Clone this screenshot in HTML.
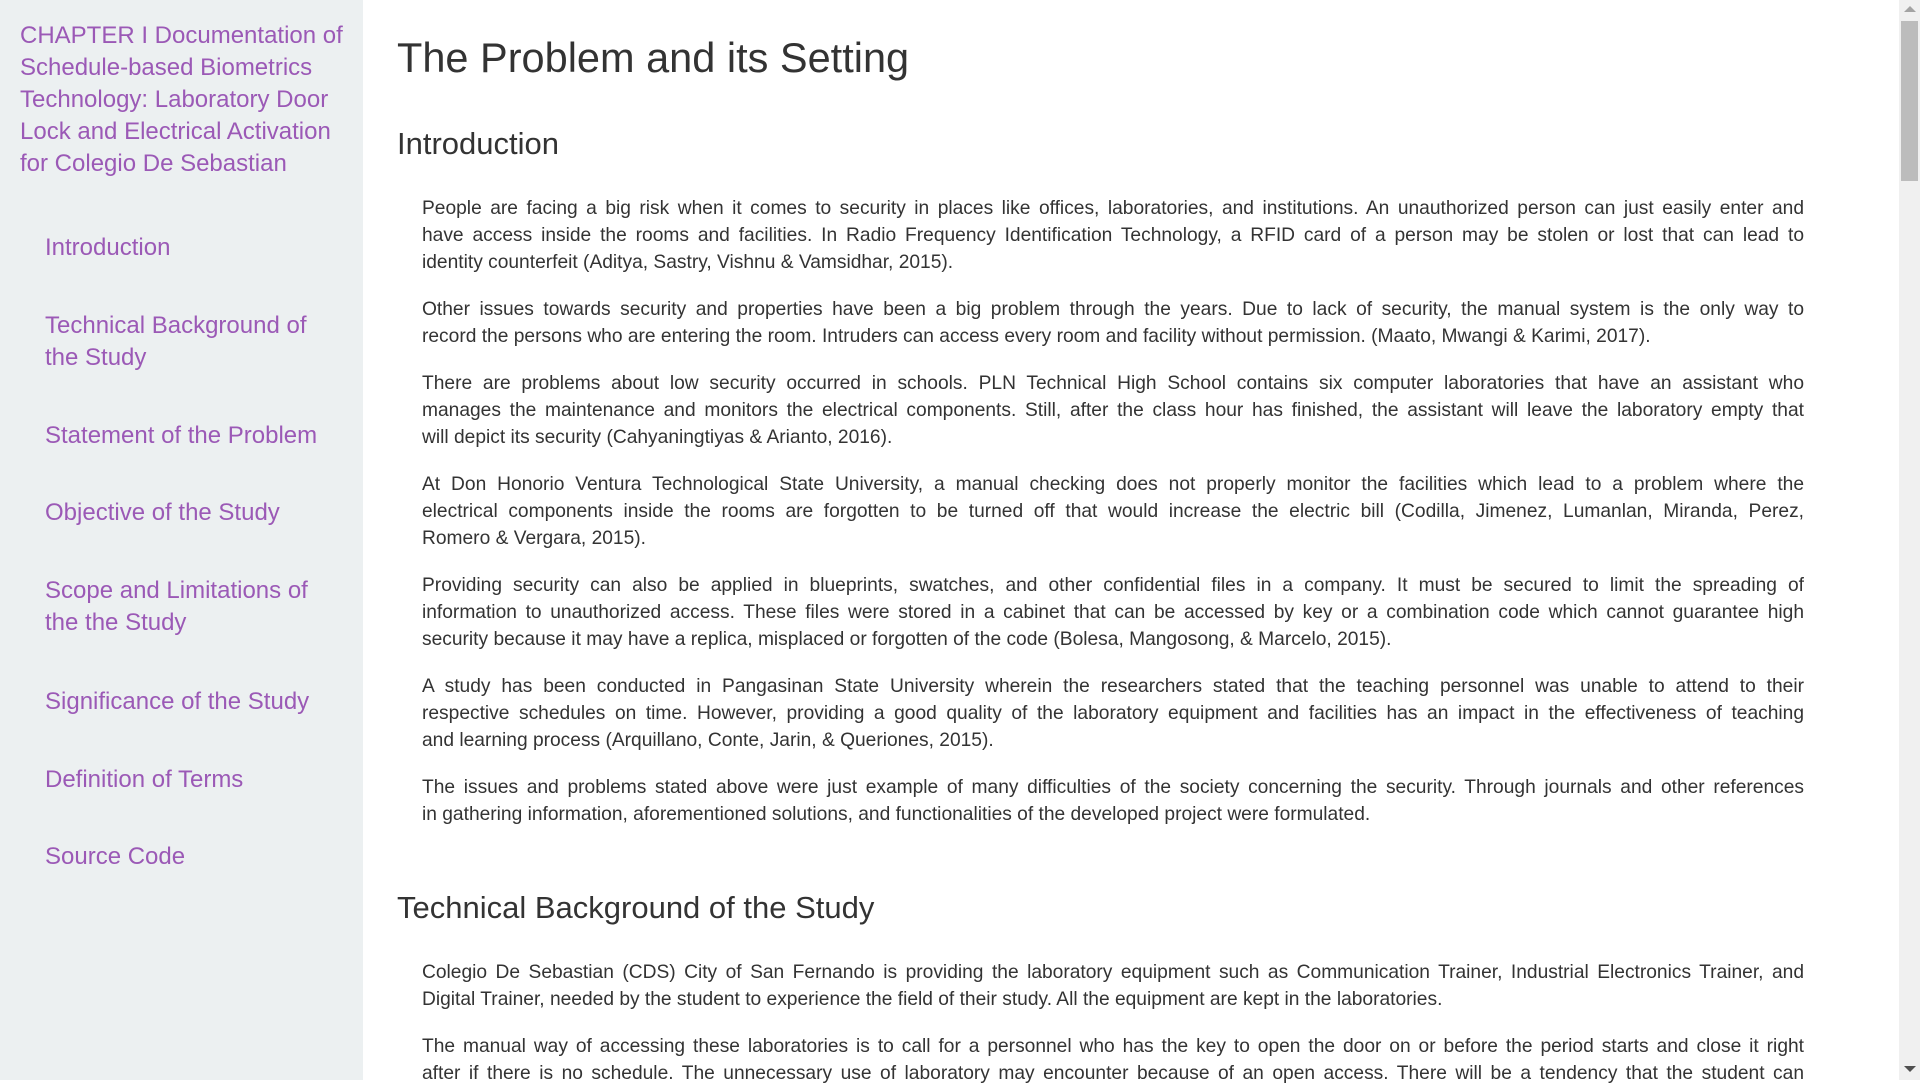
<!DOCTYPE html>
<html><head><meta charset="utf-8"><style>
*{margin:0;padding:0;box-sizing:border-box}
html,body{width:1920px;height:1080px;overflow:hidden;background:#fff;font-family:"Liberation Sans",sans-serif}
#side{position:absolute;left:0;top:0;width:363px;height:1080px;background:#ecf0f1;color:#9b59b6}
#side .t{position:absolute;left:20px;top:20px;width:335px;font-size:24px;line-height:32px}
#side .n{position:absolute;left:45px;font-size:24px;line-height:32px;width:285px}
#main{position:absolute;left:397px;top:0;width:1410px;color:#333}
h1{position:absolute;top:34px;font-size:41.5px;font-weight:normal;white-space:nowrap}
h2{position:absolute;font-size:31px;font-weight:normal;white-space:nowrap}
.p{position:absolute;left:25px;width:1382px;font-size:19.2px;line-height:27px}
.p div{text-align:justify;text-align-last:justify;white-space:nowrap;overflow:hidden;height:27px}
.p div.l{text-align-last:left}
#sb{position:absolute;left:1899px;top:0;width:21px;height:1080px;background:#f0f0f0}
#th{position:absolute;left:1901px;top:21px;width:17px;height:160px;background:#bcbcbc}
</style></head><body>
<div id="side">
<div class="t">CHAPTER I Documentation of Schedule-based Biometrics Technology: Laboratory Door Lock and Electrical Activation for Colegio De Sebastian</div>
<div class="n" style="top:232px">Introduction</div>
<div class="n" style="top:310px">Technical Background of<br>the Study</div>
<div class="n" style="top:420px">Statement of the Problem</div>
<div class="n" style="top:497px">Objective of the Study</div>
<div class="n" style="top:575px">Scope and Limitations of<br>the the Study</div>
<div class="n" style="top:686px">Significance of the Study</div>
<div class="n" style="top:764px">Definition of Terms</div>
<div class="n" style="top:841px">Source Code</div>
</div>
<div id="main">
<h1>The Problem and its Setting</h1>
<h2 style="top:126px">Introduction</h2>
<div class="p" style="top:195px">
<div>People are facing a big risk when it comes to security in places like offices, laboratories, and institutions. An unauthorized person can just easily enter and</div>
<div>have access inside the rooms and facilities. In Radio Frequency Identification Technology, a RFID card of a person may be stolen or lost that can lead to</div>
<div class="l">identity counterfeit (Aditya, Sastry, Vishnu &amp; Vamsidhar, 2015).</div>
</div>
<div class="p" style="top:296px">
<div>Other issues towards security and properties have been a big problem through the years. Due to lack of security, the manual system is the only way to</div>
<div class="l">record the persons who are entering the room. Intruders can access every room and facility without permission. (Maato, Mwangi &amp; Karimi, 2017).</div>
</div>
<div class="p" style="top:370px">
<div>There are problems about low security occurred in schools. PLN Technical High School contains six computer laboratories that have an assistant who</div>
<div>manages the maintenance and monitors the electrical components. Still, after the class hour has finished, the assistant will leave the laboratory empty that</div>
<div class="l">will depict its security (Cahyaningtiyas &amp; Arianto, 2016).</div>
</div>
<div class="p" style="top:471px">
<div>At Don Honorio Ventura Technological State University, a manual checking does not properly monitor the facilities which lead to a problem where the</div>
<div>electrical components inside the rooms are forgotten to be turned off that would increase the electric bill (Codilla, Jimenez, Lumanlan, Miranda, Perez,</div>
<div class="l">Romero &amp; Vergara, 2015).</div>
</div>
<div class="p" style="top:572px">
<div>Providing security can also be applied in blueprints, swatches, and other confidential files in a company. It must be secured to limit the spreading of</div>
<div>information to unauthorized access. These files were stored in a cabinet that can be accessed by key or a combination code which cannot guarantee high</div>
<div class="l">security because it may have a replica, misplaced or forgotten of the code (Bolesa, Mangosong, &amp; Marcelo, 2015).</div>
</div>
<div class="p" style="top:673px">
<div>A study has been conducted in Pangasinan State University wherein the researchers stated that the teaching personnel was unable to attend to their</div>
<div>respective schedules on time. However, providing a good quality of the laboratory equipment and facilities has an impact in the effectiveness of teaching</div>
<div class="l">and learning process (Arquillano, Conte, Jarin, &amp; Queriones, 2015).</div>
</div>
<div class="p" style="top:774px">
<div>The issues and problems stated above were just example of many difficulties of the society concerning the security. Through journals and other references</div>
<div class="l">in gathering information, aforementioned solutions, and functionalities of the developed project were formulated.</div>
</div>
<h2 style="top:890px">Technical Background of the Study</h2>
<div class="p" style="top:959px">
<div>Colegio De Sebastian (CDS) City of San Fernando is providing the laboratory equipment such as Communication Trainer, Industrial Electronics Trainer, and</div>
<div class="l">Digital Trainer, needed by the student to experience the field of their study. All the equipment are kept in the laboratories.</div>
</div>
<div class="p" style="top:1033px">
<div>The manual way of accessing these laboratories is to call for a personnel who has the key to open the door on or before the period starts and close it right</div>
<div>after if there is no schedule. The unnecessary use of laboratory may encounter because of an open access. There will be a tendency that the student can</div>
</div>
</div>
<div id="sb"></div><div id="th"></div>
<div style="position:absolute;left:1904px;top:6px;width:0;height:0;border-left:6px solid transparent;border-right:6px solid transparent;border-bottom:6px solid #a3a3a3"></div>
<div style="position:absolute;left:1904px;top:1066px;width:0;height:0;border-left:6px solid transparent;border-right:6px solid transparent;border-top:6px solid #505050"></div>
</body></html>
